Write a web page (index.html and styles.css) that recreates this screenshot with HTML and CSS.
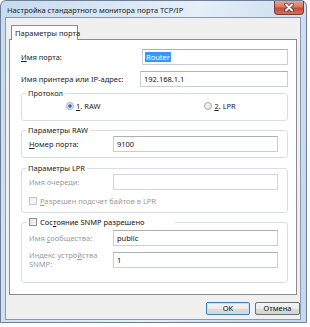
FILE: index.html
```html
<!DOCTYPE html>
<html lang="ru">
<head>
    <meta charset="UTF-8">
    <title>Настройка стандартного монитора порта TCP/IP</title>
    <link rel="stylesheet" href="styles.css">
</head>
<body>
    <div class="window">
        <div class="titlebar">
            <span class="title">Настройка стандартного монитора порта TCP/IP</span>
            <div class="close">
                <svg width="12" height="9" viewBox="0 0 12 9">
                    <path d="M3 1.5 L9 7.5 M9 1.5 L3 7.5" stroke="#5a2a22" stroke-width="3.4" stroke-linecap="round"/>
                    <path d="M3 1.5 L9 7.5 M9 1.5 L3 7.5" stroke="#fff" stroke-width="2" stroke-linecap="round"/>
                </svg>
            </div>
        </div>
        <div class="client">
            <div class="tabs">
                <div class="tab">Параметры порта</div>
            </div>
            <div class="panel">
                <div class="row row-first">
                    <span class="label"><u>И</u>мя порта:</span>
                    <div class="input input-port"><span class="selected-text">Router</span></div>
                </div>
                <div class="row row-second">
                    <span class="label">Имя принтера или IP-адрес:</span>
                    <div class="input input-ip">192.168.1.1</div>
                </div>

                <div class="group group-protocol">
                    <span class="legend">Протокол</span>
                    <div class="radios">
                        <span class="radio-item"><span class="radio checked"></span><span><u>1</u>. RAW</span></span>
                        <span class="radio-item radio-lpr"><span class="radio"></span><span><u>2</u>. LPR</span></span>
                    </div>
                </div>

                <div class="group group-raw">
                    <span class="legend">Параметры RAW</span>
                    <div class="field">
                        <span class="label"><u>Н</u>омер порта:</span>
                        <div class="input">9100</div>
                    </div>
                </div>

                <div class="group group-lpr">
                    <span class="legend">Параметры LPR</span>
                    <div class="field">
                        <span class="label disabled">Имя очереди:</span>
                        <div class="input input-disabled"></div>
                    </div>
                    <div class="check-row disabled">
                        <span class="checkbox checkbox-disabled"></span><span><u>Р</u>азрешен подсчет байтов в LPR</span>
                    </div>
                </div>

                <div class="group group-snmp">
                    <span class="legend legend-check"><span class="checkbox"></span><span>Сос<u>т</u>ояние SNMP разрешено</span></span>
                    <div class="field">
                        <span class="label disabled">Имя <u>с</u>ообщества:</span>
                        <div class="input">public</div>
                    </div>
                    <div class="field field-index">
                        <span class="label disabled">Индекс устро<u>й</u>ства<br>SNMP:</span>
                        <div class="input">1</div>
                    </div>
                </div>
            </div>
            <div class="buttons">
                <div class="button button-default">OK</div>
                <div class="button">Отмена</div>
            </div>
        </div>
    </div>
</body>
</html>
```

FILE: styles.css
```css
* {
    box-sizing: border-box;
}
body {
    margin: 0;
    background: #fff;
    font-family: "Noto Sans", "DejaVu Sans", sans-serif;
    font-size: 7.5px;
    line-height: 10px;
    color: #222;
}
u {
    text-decoration-thickness: 1px;
    text-underline-offset: 1px;
}
.window {
    width: 307px;
    height: 323px;
    padding: 0 5px 2px 4px;
    border: 1px solid #6d7f96;
    border-radius: 6px 6px 0 0;
    background: linear-gradient(100deg, #c6dbef 0%, #d9e7f5 30%, #e6eff8 55%, #cfe0f1 80%, #c2d8ee 100%);
    display: flex;
    flex-direction: column;
}
.titlebar {
    height: 16px;
    display: flex;
    justify-content: space-between;
    align-items: flex-start;
}
.title {
    margin: 4px 0 0 2px;
    color: #1a1a1a;
    white-space: nowrap;
}
.close {
    width: 30px;
    height: 14px;
    margin-right: -3px;
    border: 1px solid #7a3a30;
    border-top: none;
    border-radius: 0 0 4px 4px;
    background: linear-gradient(#e6a596 0%, #d47a68 45%, #c24a36 55%, #d2705e 100%);
    display: flex;
    align-items: center;
    justify-content: center;
}
.client {
    flex: 1;
    background: #f0f0f0;
    border: 1px solid #8b9aab;
    padding: 7px 2px 0 3px;
}
.tabs {
    display: flex;
    padding-left: 2px;
}
.tab {
    width: 67px;
    height: 15px;
    padding: 2px 0 0 3px;
    border: 1px solid #898c95;
    border-bottom: none;
    background: #fff;
    margin-bottom: -1px;
    position: relative;
    white-space: nowrap;
}
.panel {
    width: 288px;
    height: 256px;
    border: 1px solid #898c95;
    background: #fff;
    padding: 0 8px 0 11px;
}
.label {
    white-space: nowrap;
}
.row {
    display: flex;
    align-items: center;
    justify-content: space-between;
}
.row-first {
    margin-top: 9px;
}
.row-second {
    margin-top: 6px;
}
.input {
    height: 16px;
    border: 1px solid #c9ced6;
    border-top-color: #aab0b9;
    background: #fff;
    padding: 2px 0 0 3px;
    color: #111;
}
.input-port {
    width: 146px;
    padding-left: 2px;
}
.input-ip {
    width: 148px;
}
.selected-text {
    display: inline-block;
    background: #3399ff;
    color: #fff;
    padding: 0 1px;
}
.group {
    width: 267px;
    border: 1px solid #d8dee6;
    border-radius: 3px;
    padding: 0 9px 0 7px;
}
.legend {
    display: block;
    width: fit-content;
    margin: -6px 0 0 -3px;
    padding: 0 2px;
    background: #fff;
    color: #222;
    white-space: nowrap;
}
.group-protocol {
    margin-top: 6px;
    height: 28px;
}
.radios {
    display: flex;
    margin-top: 3px;
    padding-left: 37px;
}
.radio-item {
    display: flex;
    align-items: center;
    gap: 2px;
    white-space: nowrap;
}
.radio-lpr {
    margin-left: 104px;
}
.radio {
    width: 8px;
    height: 8px;
    border-radius: 50%;
    border: 1px solid #a9adb2;
    background: radial-gradient(circle at 40% 40%, #fafafa, #d8d8d8);
}
.radio.checked {
    background: radial-gradient(circle, #1f5fa8 0, #3d7cc4 35%, #dfe6ee 45%, #f4f4f4 100%);
}
.group-raw {
    margin-top: 9px;
    height: 28px;
}
.field {
    display: flex;
    align-items: center;
    justify-content: space-between;
}
.field .input {
    width: 165px;
}
.group-raw .field {
    margin-top: 1px;
}
.group-lpr {
    margin-top: 10px;
    height: 45px;
}
.group-lpr .field {
    margin-top: 1px;
}
.disabled {
    color: #9a9a9a;
}
.input-disabled {
    border-color: #d3d6db;
}
.check-row {
    display: flex;
    align-items: center;
    gap: 3px;
    margin-top: 6px;
    white-space: nowrap;
}
.checkbox {
    width: 8px;
    height: 8px;
    border: 1px solid #8f9296;
    background: linear-gradient(135deg, #e0e0e0, #f8f8f8);
}
.checkbox-disabled {
    border-color: #c3c6ca;
    background: #f4f4f4;
}
.group-snmp {
    margin-top: 9px;
    height: 61px;
}
.legend-check {
    display: flex;
    align-items: center;
    gap: 3px;
    width: 148px;
    margin-left: -2px;
    color: #111;
}
.group-snmp .field {
    margin-top: 3px;
}
.group-snmp .field-index {
    margin-top: 5px;
}
.field-index .label {
    line-height: 9px;
}
.buttons {
    display: flex;
    justify-content: flex-end;
    gap: 5px;
    margin-top: 7px;
    width: 291px;
}
.button {
    width: 45px;
    height: 13px;
    border: 1px solid #707070;
    border-radius: 2px;
    background: linear-gradient(#f4f4f4 0%, #ebebeb 50%, #dddddd 51%, #d2d2d2 100%);
    text-align: center;
    line-height: 11px;
    color: #111;
}
.button-default {
    width: 44px;
    border-color: #3c7fb1;
    box-shadow: inset 0 0 0 1px #c2e2f6;
}
```
